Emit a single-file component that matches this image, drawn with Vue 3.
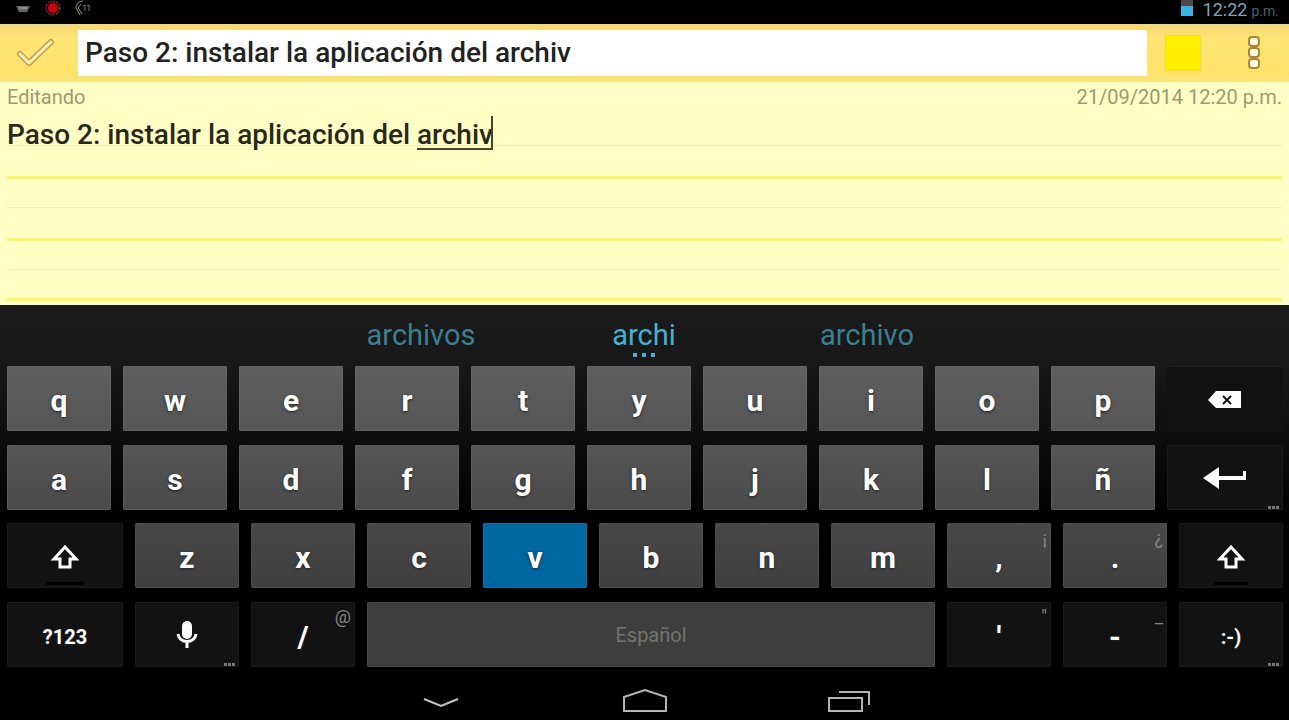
<script setup>
import { ref, onMounted } from 'vue'

const title = ref('Paso 2: instalar la aplicación del archiv')
const body = ref('Paso 2: instalar la aplicación del archiv')
const composing = ref({ left: 0, width: 0 })
const editor = ref(null)

function measureComposing() {
  const ctx = document.createElement('canvas').getContext('2d')
  const style = getComputedStyle(editor.value)
  ctx.font = `${style.fontWeight} ${style.fontSize} ${style.fontFamily}`
  const start = body.value.lastIndexOf(' ') + 1
  const left = ctx.measureText(body.value.slice(0, start)).width
  const width = ctx.measureText(body.value).width - left
  composing.value = { left: Math.round(left), width: Math.round(width) }
}

onMounted(measureComposing)

const letters = (text) => text.split('').map((label) => ({ label }))

const rows = [
  [...letters('qwertyuiop'), { icon: 'delete', name: 'Borrar', kind: 'flat', wide: true }],
  [...letters('asdfghjklñ'), { icon: 'enter', name: 'Intro', kind: 'dark', wide: true, more: true }],
  [
    { icon: 'shift', name: 'Mayúsculas', kind: 'dark', wide: true },
    ...letters('zxc'),
    { label: 'v', kind: 'pressed' },
    ...letters('bnm'),
    { label: ',', hint: '¡' },
    { label: '.', hint: '¿' },
    { icon: 'shift', name: 'Mayúsculas', kind: 'dark' }
  ],
  [
    { label: '?123', kind: 'dark', wide: true, small: true },
    { icon: 'mic', name: 'Voz', kind: 'dark', more: true },
    { label: '/', kind: 'dark', hint: '@' },
    { label: 'Español', kind: 'space' },
    { label: "'", kind: 'dark', hint: '"' },
    { label: '-', kind: 'dark', hint: '_' },
    { label: ':-)', kind: 'dark', small: true, more: true }
  ]
]
</script>

<template>
  <div class="screen">
    <div class="status">
      <div class="notices">
        <svg width="16" height="14" viewBox="0 0 16 14"><path d="M1 6h14l-3 6H4z" fill="#666" /><path d="M4 8h8" stroke="#bbb" /></svg>
        <svg width="16" height="16" viewBox="0 0 16 16"><circle cx="8" cy="8" r="7" fill="#300" stroke="#7a5555" stroke-dasharray="2 1" /><circle cx="8" cy="8" r="5" fill="#c8000f" /></svg>
        <svg width="16" height="16" viewBox="0 0 16 16" fill="none" stroke="#8ca474"><path d="M8 1C4 1 1 4 1 8l4 7M6 4L3 8l4 6" /><path d="M8 6l2-1v6M12 6l2-1v6" stroke="#64805a" /></svg>
      </div>
      <div class="clock">
        <svg width="12" height="16" viewBox="0 0 12 16"><path d="M0 0h12v6H0z" fill="#4a4a4a" /><path d="M0 6h12v10H0z" fill="#39b3e6" /></svg>
        <span class="time">12:22</span><span class="ampm">p.m.</span>
      </div>
    </div>

    <header class="bar">
      <button class="done" aria-label="Listo">
        <svg width="40" height="30" viewBox="0 0 40 30" fill="none" stroke-linecap="round" stroke-linejoin="round">
          <path d="M4 16l9 9L35 4" stroke="#c0a050" stroke-width="6" />
          <path d="M4 16l9 9L35 4" stroke="#fff2b8" stroke-width="3" />
        </svg>
      </button>
      <input v-model="title" class="title" aria-label="Título" />
      <button class="color" aria-label="Color"><span class="swatch"></span></button>
      <button class="menu" aria-label="Más opciones">
        <svg width="14" height="36" viewBox="0 0 14 36" fill="#fffbe0" stroke="#a88739" stroke-width="2">
          <rect x="2" y="2" width="10" height="9" rx="3" /><rect x="2" y="13" width="10" height="9" rx="3" /><rect x="2" y="24" width="10" height="9" rx="3" />
        </svg>
      </button>
    </header>

    <main class="note">
      <div class="meta"><span>Editando</span><span>21/09/2014 12:20 p.m.</span></div>
      <div class="paper">
        <textarea ref="editor" v-model="body" class="editor" aria-label="Nota" spellcheck="false" @input="measureComposing"></textarea>
        <span class="composing" :style="{ left: composing.left + 'px', width: composing.width + 'px' }"></span>
      </div>
    </main>

    <section class="keyboard">
      <div class="suggestions">
        <button>archivos</button>
        <button class="best">archi<span class="dots"><i></i><i></i><i></i></span></button>
        <button>archivo</button>
      </div>
      <div v-for="(row, r) in rows" :key="r" class="row" :class="'row' + r">
        <button
          v-for="(k, i) in row"
          :key="i"
          class="key"
          :class="[k.kind, { wide: k.wide, small: k.small }]"
          :aria-label="k.name"
        >
          <svg v-if="k.icon === 'delete'" width="36" height="22" viewBox="0 0 36 22">
            <path d="M9 1h25v17H9L1 10z" fill="#fff" /><path d="M16 6l8 8M24 6l-8 8" stroke="#111" stroke-width="2" />
          </svg>
          <svg v-else-if="k.icon === 'enter'" width="44" height="28" viewBox="0 0 44 28">
            <path d="M0 12L16 1v9h24V5h3v9H16v9z" fill="#fff" />
          </svg>
          <svg v-else-if="k.icon === 'shift'" width="30" height="28" viewBox="0 0 30 28">
            <path d="M15 3L4 15h6v8h10v-8h6z" fill="none" stroke="#fff" stroke-width="3" />
          </svg>
          <svg v-else-if="k.icon === 'mic'" width="22" height="32" viewBox="0 0 22 32">
            <rect x="6" y="0" width="10" height="18" rx="5" fill="#fff" />
            <path d="M2 13c1 10 17 10 18 0M11 20v7" fill="none" stroke="#fff" stroke-width="3" />
          </svg>
          <template v-else>{{ k.label }}</template>
          <span v-if="k.hint" class="hint">{{ k.hint }}</span>
          <span v-if="k.more" class="more"><i></i><i></i><i></i></span>
          <span v-if="k.icon === 'shift'" class="lock"></span>
        </button>
      </div>
    </section>

    <nav class="nav">
      <button aria-label="Ocultar teclado">
        <svg width="38" height="24" viewBox="0 0 38 24" fill="none" stroke="#c4c4c4" stroke-width="2"><path d="M2 10l17 7 17-7" /></svg>
      </button>
      <button aria-label="Inicio">
        <svg width="46" height="24" viewBox="0 0 46 24" fill="none" stroke="#b4b4b4" stroke-width="2"><path d="M2 22V8l21-7 21 7v14z" /></svg>
      </button>
      <button aria-label="Recientes">
        <svg width="44" height="24" viewBox="0 0 44 24" fill="none" stroke="#b4b4b4" stroke-width="2"><path d="M2 9h33v13H2zM12 3h30v13" /></svg>
      </button>
    </nav>
  </div>
</template>

<style>
body {
  background: #000;
}
</style>

<style scoped>
.screen {
  display: flex;
  flex-direction: column;
  min-height: 100vh;
  background: #000;
  font-family: Roboto, sans-serif;
}
button {
  margin: 0;
  padding: 0;
  border: 0;
  background: none;
  font: inherit;
  color: inherit;
}
.status {
  display: flex;
  justify-content: space-between;
  height: 24px;
  padding: 0 10px 0 15px;
}
.notices {
  display: flex;
  gap: 14px;
}
.notices svg,
.clock svg {
  display: block;
}
.clock {
  display: flex;
  align-items: baseline;
  color: #7fa3b4;
  line-height: 20px;
}
.clock svg {
  align-self: flex-start;
  margin-right: 10px;
}
.time {
  font-size: 18px;
}
.ampm {
  margin-left: 4px;
  font-size: 14px;
  color: #426070;
}
.bar {
  display: flex;
  align-items: center;
  height: 58px;
  box-sizing: border-box;
  padding-bottom: 2px;
  border-top: 2px solid #f0d98a;
  background: linear-gradient(#f6d873, #ffe475 12px, #ffe26a 48px, #fbe47a);
}
.done {
  display: flex;
  justify-content: center;
  flex: none;
  width: 78px;
  padding-right: 6px;
  box-sizing: border-box;
}
.title {
  flex: 1;
  min-width: 0;
  height: 46px;
  box-sizing: border-box;
  padding: 0 7px 2px;
  border: 0;
  border-radius: 0;
  outline: 0;
  background: #fff;
  color: #222;
  font: 500 28px Roboto, sans-serif;
}
.color {
  flex: none;
  padding: 0 18px;
}
.swatch {
  display: block;
  width: 36px;
  height: 36px;
  border: 1px solid #fbd92f;
  box-sizing: border-box;
  background: #fff000;
}
.menu {
  display: flex;
  justify-content: center;
  flex: none;
  width: 70px;
}
.note {
  display: flex;
  flex-direction: column;
  flex: 1;
  padding: 0 7px;
  background: #ffffc6;
}
.meta {
  display: flex;
  justify-content: space-between;
  line-height: 30px;
  font-size: 20px;
  color: #9c9a72;
}
.paper {
  position: relative;
  flex: 1;
  min-height: 193px;
  background: linear-gradient(
    transparent 33px,
    #f2efb4 33px 34px,
    transparent 34px 64px,
    #faf765 64px 67px,
    transparent 67px 95px,
    #f2efb4 95px 96px,
    transparent 96px 126px,
    #faf765 126px 129px,
    transparent 129px 157px,
    #f2efb4 157px 158px,
    transparent 158px 186px,
    #faf765 186px 189px,
    transparent 189px
  );
}
.editor {
  display: block;
  width: 100%;
  height: 100%;
  box-sizing: border-box;
  padding: 7px 0 0;
  border: 0;
  outline: 0;
  resize: none;
  background: transparent;
  color: #29291a;
  font: 500 28px/32px Roboto, sans-serif;
}
.composing {
  position: absolute;
  top: 4px;
  height: 34px;
  box-sizing: border-box;
  border-right: 2px solid #45452c;
  border-bottom: 2px solid #45452c;
  pointer-events: none;
}
.keyboard {
  padding: 0 6px 0 7px;
  background: linear-gradient(#1a1a1a, #181818 60px, #000 220px);
}
.suggestions {
  display: grid;
  grid-template-columns: repeat(3, 223px);
  justify-content: center;
  height: 61px;
  padding-right: 2px;
  font-size: 29px;
  line-height: 56px;
  color: #3c7f92;
}
.suggestions button {
  position: relative;
  padding-bottom: 2px;
}
.suggestions .best {
  color: #46b0d4;
}
.dots {
  position: absolute;
  left: 0;
  right: 0;
  top: 48px;
  display: flex;
  justify-content: center;
  gap: 5px;
}
.dots i {
  width: 4px;
  height: 4px;
  background: #46b0d4;
}
.row {
  display: flex;
  gap: 12px;
  padding-bottom: 14px;
}
.row1 {
  padding-bottom: 13px;
}
.key {
  position: relative;
  display: flex;
  align-items: center;
  justify-content: center;
  flex: 104 1 0;
  min-width: 0;
  height: 65px;
  padding-top: 4px;
  box-sizing: border-box;
  border-radius: 2px;
  box-shadow: inset 0 0 0 1px #646464;
  background: linear-gradient(#5f5f5f, #555);
  color: #fff;
  font-size: 30px;
  font-weight: 700;
  text-shadow: 0 1px 3px #222;
}
.row1 .key {
  box-shadow: inset 0 0 0 1px #5b5b5b;
  background: linear-gradient(#565656, #4a4a4a);
}
.row2 .key {
  box-shadow: inset 0 0 0 1px #4d4d4d;
  background: linear-gradient(#484848, #3f3f3f);
}
.row .wide {
  flex-grow: 116;
}
.row .dark {
  box-shadow: inset 0 0 0 1px #1b1b1b;
  background: #121212;
}
.row .flat {
  box-shadow: inset 0 1px #1e1e1e;
  background: #111;
}
.row .pressed {
  box-shadow: inset 0 0 0 1px #0872ae;
  background: #0067a1;
}
.row .space {
  flex-grow: 568;
  padding-top: 0;
  box-shadow: inset 0 0 0 1px #4b4b4b;
  background: #3e3e3e;
  color: #74746e;
  font-size: 20px;
  font-weight: 400;
  text-shadow: none;
}
.row .small {
  font-size: 20px;
}
.hint {
  position: absolute;
  top: 5px;
  right: 4px;
  line-height: 20px;
  font-size: 18px;
  font-weight: 400;
  color: #858585;
  text-shadow: none;
}
.more {
  position: absolute;
  right: 4px;
  bottom: 1px;
  display: flex;
  gap: 1px;
}
.more i {
  width: 3px;
  height: 3px;
  background: #777;
}
.lock {
  position: absolute;
  left: 34%;
  right: 34%;
  bottom: 3px;
  height: 3px;
  background: #000;
}
.nav {
  display: grid;
  grid-template-columns: repeat(3, 204px);
  justify-content: center;
  height: 39px;
  box-sizing: border-box;
}
.nav button {
  display: flex;
  align-items: center;
  justify-content: center;
}
</style>
